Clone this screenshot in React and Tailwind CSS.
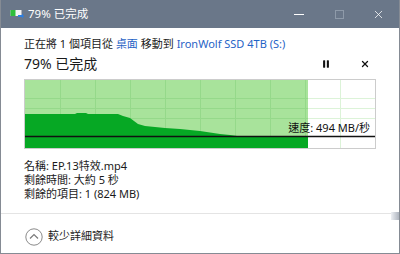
import { Pause, X } from "lucide-react";

const FONT = {
  fontFamily: '"Noto Sans", "Noto Sans CJK TC", sans-serif',
};

// dark green speed profile, relative to chart inner box (350x68)
const speedPoints = [
  [0, 34], [50, 34], [52, 33], [61, 33], [63, 34], [93, 34], [98, 36],
  [105, 38], [113, 44], [120, 46], [130, 47], [140, 48], [155, 49],
  [175, 51], [195, 54], [205, 55], [212, 56], [283, 56], [283, 68], [0, 68],
];

const SpeedChart = () => {
  const gridX = [35, 70, 105, 140, 175, 210, 245, 280, 315];
  const gridY = [18, 28, 38];

  return (
    <div className="relative mt-[5px] h-[70px] w-[352px] border border-[#cccccc] bg-white">
      <svg width="350" height="68" className="block">
        <rect x="0" y="0" width="283" height="68" fill="#a8e39b" />
        {gridX.map((x) => (
          <line
            key={"x" + x}
            x1={x + 0.5}
            x2={x + 0.5}
            y1="0"
            y2="68"
            stroke={x < 283 ? "#95d98a" : "#dcf3d8"}
          />
        ))}
        {gridY.map((y) => (
          <g key={"y" + y}>
            <line x1="0" x2="283" y1={y + 0.5} y2={y + 0.5} stroke="#95d98a" />
            <line x1="283" x2="350" y1={y + 0.5} y2={y + 0.5} stroke="#dcf3d8" />
          </g>
        ))}
        <polygon
          points={speedPoints.map((p) => p.join(",")).join(" ")}
          fill="#06a824"
        />
        <line x1="0" x2="350" y1="56.5" y2="56.5" stroke="#111111" strokeWidth="1.3" />
      </svg>
      <div className="absolute right-[5px] top-[40px] text-[11px] leading-[16px] text-[#111111]">
        速度: 494 MB/秒
      </div>
    </div>
  );
};

const WindowIcon = () => (
  <svg width="14" height="10" viewBox="0 0 14 10">
    <rect x="0.5" y="1" width="11" height="6" fill="#f4f4f4" />
    <rect x="0.5" y="1" width="5" height="6" fill="#2fbf3a" />
    <path d="M8 6 H12 V4.5 L14 7 L12 9.5 V8 H8 Z" fill="#2f7fe0" />
  </svg>
);

export default function App() {
  return (
    <div
      className="flex h-[254px] w-[400px] flex-col border-x border-b border-[#858b94] bg-white"
      style={FONT}
    >
      {/* title bar */}
      <div className="flex h-[28px] items-center bg-[#6a7789] pl-[9px] text-white">
        <WindowIcon />
        <span className="ml-[4px] text-[11.5px]">79% 已完成</span>
        <div className="ml-auto flex h-full items-center">
          <div className="flex w-[40px] justify-center">
            <div className="h-[1px] w-[10px] bg-white" />
          </div>
          <div className="flex w-[40px] justify-center">
            <div className="h-[9px] w-[9px] border border-[#8e9aa9]" />
          </div>
          <div className="flex w-[40px] justify-center pr-[2px]">
            <X size={13} strokeWidth={1.4} />
          </div>
        </div>
      </div>

      {/* body */}
      <div className="flex flex-col px-[23px] pt-[8px]">
        <div className="h-[16px] text-[11px] leading-[16px] text-[#1a1a1a]">
          正在將 1 個項目從 <span className="text-[#1f63c6]">桌面</span> 移動到{" "}
          <span className="text-[#1f63c6]">IronWolf SSD 4TB (S:)</span>
        </div>
        <div className="mt-[2px] flex h-[20px] items-center">
          <span className="text-[14px] leading-[20px] text-[#1a1a1a]">79% 已完成</span>
          <div className="ml-auto flex items-center gap-[29px] pr-[6px]">
            <Pause size={10} strokeWidth={0} fill="#111111" />
            <X size={10} strokeWidth={3} className="text-[#111111]" />
          </div>
        </div>
        <SpeedChart />
        <div className="mt-[10px] flex flex-col text-[11px] leading-[14px] text-[#1a1a1a]">
          <div className="h-[14px]">名稱: EP.13特效.mp4</div>
          <div className="h-[14px]">剩餘時間: 大約 5 秒</div>
          <div className="h-[14px]">剩餘的項目: 1 (824 MB)</div>
        </div>
      </div>

      {/* separator */}
      <div className="mt-[11px] flex items-start">
        <div className="mt-[1px] h-[1px] flex-1 bg-[#e4e4e4]" />
        <div className="h-[8px] w-[8px] bg-gradient-to-r from-[#eef0f4] to-[#aeb4be]" />
      </div>

      {/* footer */}
      <div className="flex flex-1 items-center pl-[24px]">
        <svg width="18" height="18" viewBox="0 0 18 18">
          <circle cx="9" cy="9" r="8.2" fill="none" stroke="#8a8a8a" strokeWidth="1" />
          <path d="M5 10.5 L9 6.5 L13 10.5" fill="none" stroke="#7a7a7a" strokeWidth="1.2" />
        </svg>
        <span className="ml-[5px] text-[11px] text-[#1a1a1a]">較少詳細資料</span>
      </div>
    </div>
  );
}
